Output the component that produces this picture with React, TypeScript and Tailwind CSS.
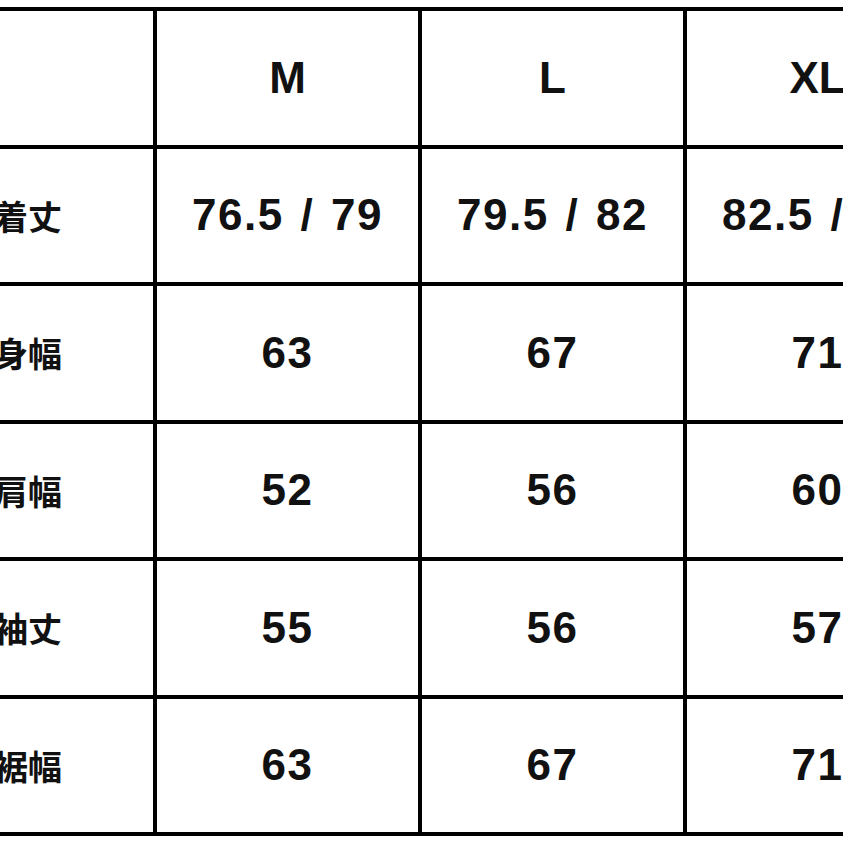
import React from "react";

const sizes = ["M", "L", "XL"];
const rows: { label: string; values: string[] }[] = [
  { label: "着丈", values: ["76.5 / 79", "79.5 / 82", "82.5 / 85"] },
  { label: "身幅", values: ["63", "67", "71"] },
  { label: "肩幅", values: ["52", "56", "60"] },
  { label: "袖丈", values: ["55", "56", "57"] },
  { label: "裾幅", values: ["63", "67", "71"] },
];

const latin = { fontFamily: '"Liberation Sans", Arial, sans-serif' };
const jp = { fontFamily: '"Noto Sans CJK JP", sans-serif' };

export default function App() {
  return (
    <div className="w-[843px] h-[843px] overflow-hidden bg-white pt-[7px]">
      <div className="ml-[-101px] w-[1200px] bg-black p-[4px] grid grid-cols-[250px_261px_261px_261px] auto-rows-[133.5px] gap-[4px]">
        <div className="bg-white" />
        {sizes.map((s) => (
          <div
            key={s}
            className="bg-white flex items-center justify-center text-[44px] font-bold text-[#111]"
            style={latin}
          >
            {s}
          </div>
        ))}
        {rows.map((r) => (
          <React.Fragment key={r.label}>
            <div
              className="bg-white flex items-center justify-center text-[34px] font-bold text-[#111]"
              style={jp}
            >
              {r.label}
            </div>
            {r.values.map((v, i) => (
              <div
                key={i}
                className="bg-white flex items-center justify-center text-[44px] font-bold text-[#111] tracking-[1.5px] [word-spacing:3px] whitespace-pre"
                style={latin}
              >
                {v}
              </div>
            ))}
          </React.Fragment>
        ))}
      </div>
    </div>
  );
}
